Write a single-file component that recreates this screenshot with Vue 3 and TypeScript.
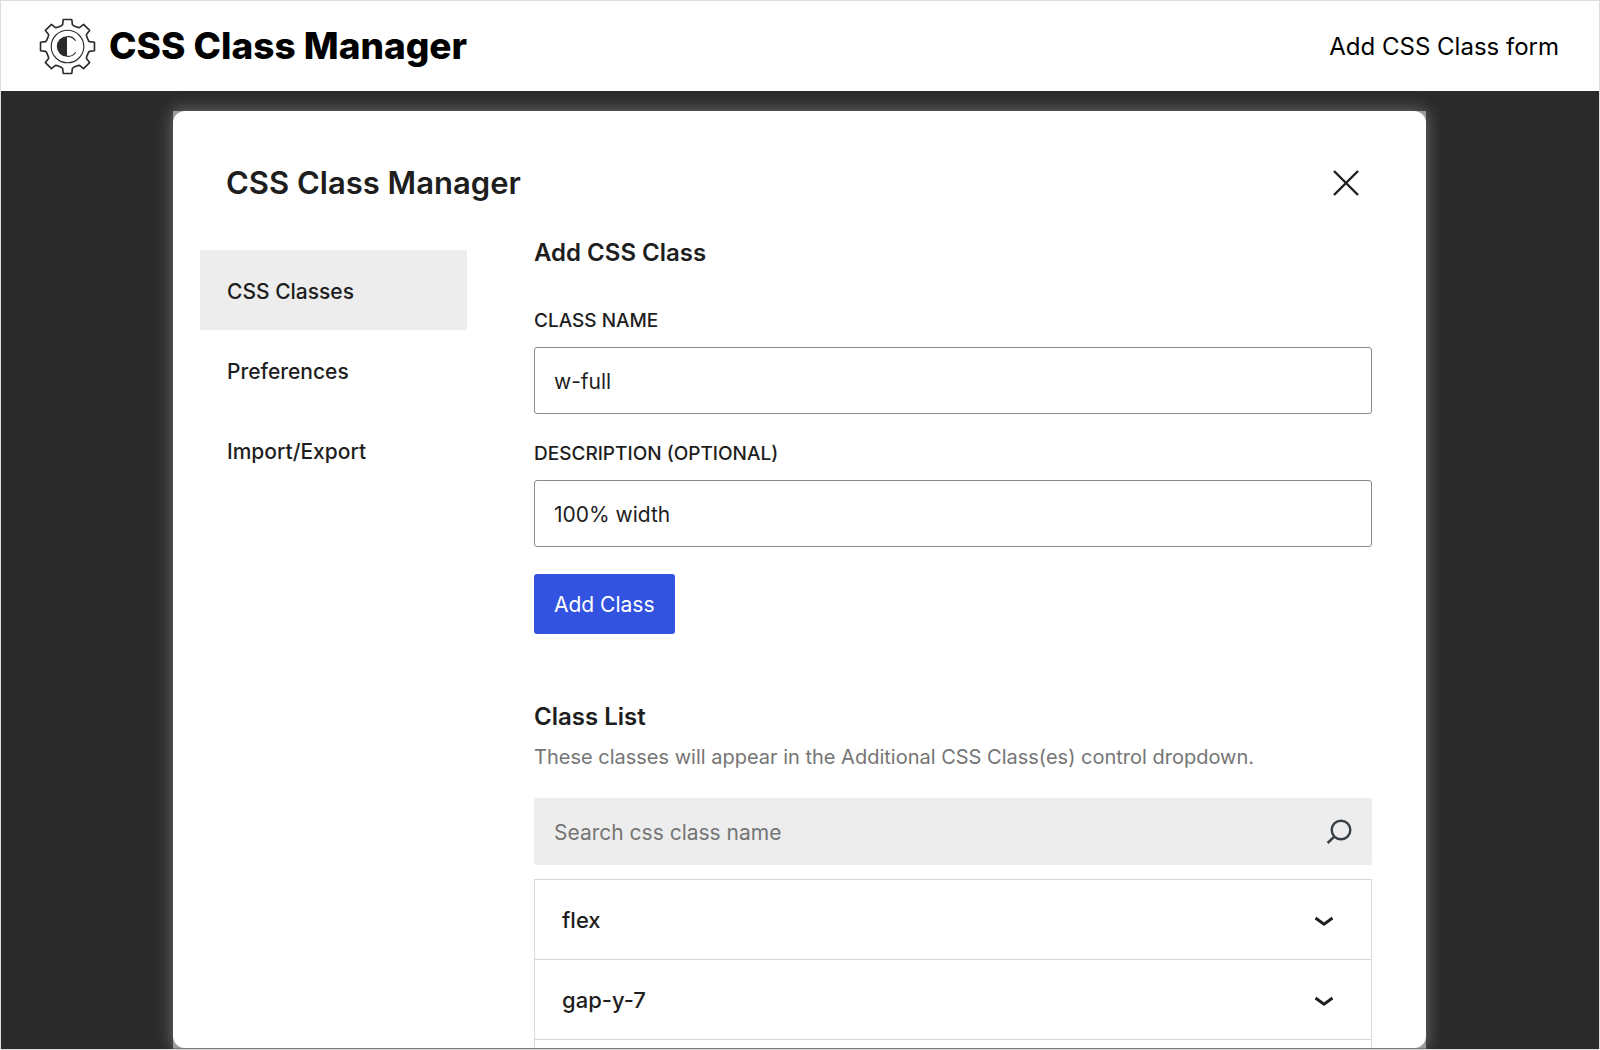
<script setup lang="ts">
import { ref } from 'vue'

interface Section {
  id: string
  label: string
}

const sections: Section[] = [
  { id: 'classes', label: 'CSS Classes' },
  { id: 'preferences', label: 'Preferences' },
  { id: 'transfer', label: 'Import/Export' },
]

const active = ref('classes')
const className = ref('w-full')
const description = ref('100% width')
const search = ref('')
const classes = ref<string[]>(['flex', 'gap-y-7'])

// Outline of one gear tooth pointing up, repeated every 45 degrees.
const tooth: [number, number][] = [
  [-6, -20.5],
  [-4.8, -21.5],
  [-4.2, -26.5],
  [4.2, -26.5],
  [4.8, -21.5],
  [6, -20.5],
]

const gearPoints = Array.from({ length: 8 }, (_, i) => {
  const a = (i * Math.PI) / 4
  return tooth
    .map(([x, y]) => {
      const px = x * Math.cos(a) - y * Math.sin(a)
      const py = x * Math.sin(a) + y * Math.cos(a)
      return `${px.toFixed(2)},${py.toFixed(2)}`
    })
    .join(' ')
}).join(' ')

function addClass() {
  const name = className.value.trim()
  if (name && !classes.value.includes(name)) classes.value.push(name)
}
</script>

<template>
  <div class="page">
    <header class="topbar">
      <div class="brand">
        <svg class="gear" viewBox="-28 -28 56 56" aria-hidden="true">
          <polygon :points="gearPoints" fill="none" stroke="#2b2b2b" stroke-width="1.6" stroke-linejoin="round" />
          <circle r="16" fill="none" stroke="#2b2b2b" stroke-width="1.1" />
          <path d="M-0.5 -10A10 10 0 0 0 -0.5 10Z" fill="#2b2b2b" />
          <path d="M-0.5 -9.6C3 -10 6 -8.6 8 -5.6M-0.5 9.6C3 10 6 8.6 8 5.6" fill="none" stroke="#2b2b2b" stroke-width="1.1" />
        </svg>
        <span class="brand-name">CSS Class Manager</span>
      </div>
      <span class="caption">Add CSS Class form</span>
    </header>

    <main class="stage">
      <div class="frame">
        <section class="modal" role="dialog" aria-labelledby="modal-title">
          <div class="modal-head">
            <h1 id="modal-title">CSS Class Manager</h1>
            <button class="close" type="button" aria-label="Close">
              <svg viewBox="0 0 28 28" aria-hidden="true">
                <path d="M2 2L26 26M26 2L2 26" fill="none" stroke="#1e1e1e" stroke-width="2.4" />
              </svg>
            </button>
          </div>

          <div class="modal-body">
            <nav class="tabs">
              <button
                v-for="s in sections"
                :key="s.id"
                type="button"
                class="tab"
                :class="{ active: s.id === active }"
                @click="active = s.id"
              >
                {{ s.label }}
              </button>
            </nav>

            <div class="content">
              <h2>Add CSS Class</h2>
              <form class="form" @submit.prevent="addClass">
                <label class="label" for="class-name">Class name</label>
                <input id="class-name" v-model="className" class="field" type="text" />
                <label class="label" for="class-desc">Description (optional)</label>
                <input id="class-desc" v-model="description" class="field" type="text" />
                <button class="primary" type="submit">Add Class</button>
              </form>

              <h2>Class List</h2>
              <p class="hint">These classes will appear in the Additional CSS Class(es) control dropdown.</p>
              <div class="search">
                <input v-model="search" type="search" placeholder="Search css class name" aria-label="Search css class name" />
                <svg viewBox="0 0 26 26" aria-hidden="true">
                  <circle cx="15" cy="11" r="9.3" fill="none" stroke="#3a4046" stroke-width="2.4" />
                  <path d="M8.6 17.4L1.6 24" fill="none" stroke="#3a4046" stroke-width="2.6" />
                </svg>
              </div>
              <ul class="list">
                <li v-for="c in classes" :key="c">
                  <button class="row" type="button">
                    <span>{{ c }}</span>
                    <svg viewBox="0 0 20 12" aria-hidden="true">
                      <path d="M1.5 4L10 10.2L18.5 4" fill="none" stroke="#1e1e1e" stroke-width="2.8" />
                    </svg>
                  </button>
                </li>
              </ul>
            </div>
          </div>
        </section>
      </div>
    </main>
  </div>
</template>

<style>
body {
  margin: 0;
}
</style>

<style scoped>
* {
  box-sizing: border-box;
}

.page {
  display: flex;
  flex-direction: column;
  height: 100vh;
  border: 1px solid #dddddd;
  background: #2a2a2a;
  color: #1e1e1e;
  font-family: Inter, "Liberation Sans", sans-serif;
  overflow: hidden;
}

button,
input {
  font: inherit;
  color: inherit;
}

.topbar {
  display: flex;
  flex: none;
  align-items: center;
  justify-content: space-between;
  height: 90px;
  padding: 0 40px 0 38px;
  background: #ffffff;
  color: #000000;
}

.brand {
  display: flex;
  align-items: center;
  gap: 13px;
}

.gear {
  width: 57px;
  height: 57px;
}

.brand-name {
  font-size: 37px;
  font-weight: 800;
  line-height: 48px;
}

.caption {
  padding-top: 2px;
  font-size: 24px;
  line-height: 32px;
}

.stage {
  flex: 1;
  min-height: 0;
  padding: 20px 173px 0 172px;
  overflow: hidden;
}

.frame {
  height: 100%;
  border-bottom: 1px solid #777777;
  background: #9c9c9c;
  box-shadow: 0 0 16px rgba(255, 255, 255, 0.35);
}

.modal {
  display: flex;
  flex-direction: column;
  height: 100%;
  padding: 40px 54px 0 27px;
  border-radius: 12px;
  background: #ffffff;
  overflow: hidden;
}

.modal-head {
  display: flex;
  flex: none;
  align-items: center;
  justify-content: space-between;
  height: 64px;
  padding: 0 12px 0 26px;
}

h1,
h2,
p,
ul {
  margin: 0;
  padding: 0;
}

h1 {
  font-size: 31px;
  font-weight: 600;
  line-height: 40px;
}

.close {
  display: flex;
  padding: 0;
  border: 0;
  background: none;
}

.close svg {
  width: 28px;
  height: 28px;
}

.modal-body {
  display: flex;
  flex: 1;
  gap: 67px;
  padding-top: 22px;
}

.tabs {
  display: flex;
  flex: none;
  flex-direction: column;
  width: 267px;
  padding-top: 13px;
}

.tab {
  height: 80px;
  padding: 2px 27px 0;
  border: 0;
  background: none;
  font-size: 21px;
  font-weight: 500;
  text-align: left;
}

.tab.active {
  background: #ededed;
}

.content {
  display: flex;
  flex: 1;
  flex-direction: column;
  min-width: 0;
}

h2 {
  font-size: 24px;
  font-weight: 600;
  line-height: 32px;
}

.form {
  display: flex;
  flex-direction: column;
  margin: 39px 0 67px;
}

.label {
  font-size: 19px;
  font-weight: 500;
  line-height: 26px;
  text-transform: uppercase;
}

.field {
  height: 67px;
  margin: 13px 0 27px;
  padding: 2px 19px 0;
  border: 1px solid #8a8a8a;
  border-radius: 3px;
  background: #ffffff;
  font-size: 21px;
}

.primary {
  align-self: flex-start;
  height: 60px;
  padding: 0 20px;
  border: 0;
  border-radius: 3px;
  background: #3153e0;
  color: #ffffff;
  font-size: 21px;
}

.hint {
  margin-top: 12px;
  color: #757575;
  font-size: 20px;
  line-height: 24px;
}

.search {
  display: flex;
  flex: none;
  align-items: center;
  height: 67px;
  margin: 29px 0 14px;
  padding: 0 20px;
  border-radius: 3px;
  background: #ededed;
}

.search input {
  flex: 1;
  min-width: 0;
  padding: 2px 0 0;
  border: 0;
  background: none;
  font-size: 21px;
}

.search input::placeholder {
  color: #757575;
  opacity: 1;
}

.search svg {
  width: 26px;
  height: 26px;
}

.list {
  flex: 1;
  border: 1px solid #d8d8d8;
  border-bottom: 0;
  list-style: none;
}

.list li {
  border-bottom: 1px solid #d8d8d8;
}

.row {
  display: flex;
  align-items: center;
  justify-content: space-between;
  width: 100%;
  height: 79px;
  padding: 0 37px 0 27px;
  border: 0;
  background: none;
  font-size: 22px;
  font-weight: 500;
}

.row svg {
  width: 20px;
  height: 12px;
  overflow: visible;
}
</style>
